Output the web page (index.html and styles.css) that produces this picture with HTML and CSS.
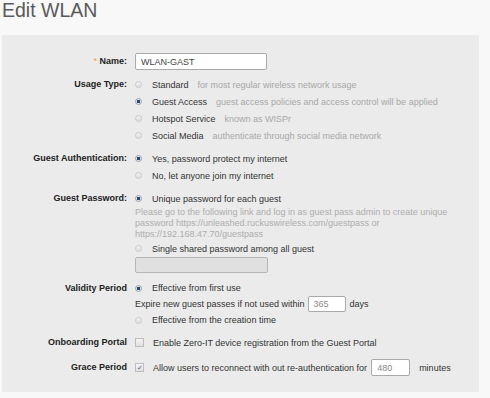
FILE: index.html
```html
<!DOCTYPE html>
<html lang="en">
  <head>
    <meta charset="UTF-8" />
    <title>Edit WLAN</title>
    <link rel="stylesheet" href="styles.css">
  </head>
  <body>
    <h1 class="title">Edit WLAN</h1>
    <div class="panel">
      <div class="row">
        <div class="label"><span class="req">*</span> Name:</div>
        <div class="field">
          <input class="text name-input" type="text" value="WLAN-GAST" />
        </div>
      </div>

      <div class="row">
        <div class="label">Usage Type:</div>
        <div class="field">
          <label class="opt"><input type="radio" name="usage" />Standard<span class="hint">for most regular wireless network usage</span></label>
          <label class="opt"><input type="radio" name="usage" checked />Guest Access<span class="hint">guest access policies and access control will be applied</span></label>
          <label class="opt"><input type="radio" name="usage" />Hotspot Service<span class="hint">known as WISPr</span></label>
          <label class="opt"><input type="radio" name="usage" />Social Media<span class="hint">authenticate through social media network</span></label>
        </div>
      </div>

      <div class="row">
        <div class="label">Guest Authentication:</div>
        <div class="field">
          <label class="opt"><input type="radio" name="auth" checked />Yes, password protect my internet</label>
          <label class="opt"><input type="radio" name="auth" />No, let anyone join my internet</label>
        </div>
      </div>

      <div class="row">
        <div class="label">Guest Password:</div>
        <div class="field">
          <label class="opt"><input type="radio" name="pass" checked />Unique password for each guest</label>
          <p class="desc">
            Please go to the following link and log in as guest pass admin to create unique<br />
            password https://unleashed.ruckuswireless.com/guestpass or<br />
            https://192.168.47.70/guestpass
          </p>
          <label class="opt"><input type="radio" name="pass" />Single shared password among all guest</label>
          <input class="text shared-input" type="text" disabled />
        </div>
      </div>

      <div class="row validity">
        <div class="label">Validity Period</div>
        <div class="field">
          <label class="opt"><input type="radio" name="valid" checked />Effective from first use</label>
          <div class="opt expire">
            Expire new guest passes if not used within
            <input class="text small-input" type="text" value="365" />
            days
          </div>
          <label class="opt"><input type="radio" name="valid" />Effective from the creation time</label>
        </div>
      </div>

      <div class="row">
        <div class="label">Onboarding Portal</div>
        <div class="field">
          <label class="opt"><input type="checkbox" />Enable Zero-IT device registration from the Guest Portal</label>
        </div>
      </div>

      <div class="row grace">
        <div class="label">Grace Period</div>
        <div class="field">
          <label class="opt"><input type="checkbox" checked />Allow users to reconnect with out re-authentication for
            <input class="text small-input minutes-input" type="text" value="480" />
            minutes</label>
        </div>
      </div>
    </div>
  </body>
</html>
```

FILE: styles.css
```css
body {
  margin: 0;
  background-color: #f8f8f8;
  font-family: "Liberation Sans", Arial, sans-serif;
  font-size: 9px;
  color: #333;
}
.title {
  margin: 0;
  height: 35px;
  padding-left: 2px;
  font-size: 19.5px;
  line-height: 20px;
  font-weight: normal;
  color: #5a5a5a;
}
.panel {
  margin-left: 2px;
  width: 477px;
  padding: 18px 0 16px;
  background-color: #ebebeb;
}
.row {
  display: flex;
  margin-bottom: 6px;
}
.row:last-child {
  margin-bottom: 0;
}
.label {
  width: 125px;
  flex-shrink: 0;
  margin-right: 8px;
  text-align: right;
  font-weight: bold;
  color: #222;
  line-height: 17px;
}
.req {
  color: #f0a050;
  font-weight: normal;
}
.field {
  display: flex;
  flex-direction: column;
  align-items: flex-start;
}
.opt {
  display: flex;
  align-items: center;
  height: 17px;
  white-space: nowrap;
}
.hint {
  margin-left: 9px;
  color: #a8a8a8;
}
.desc {
  margin: 0;
  line-height: 11px;
  color: #adadad;
}

/* inputs */
.text {
  box-sizing: border-box;
  height: 17px;
  margin: 0;
  padding: 0 5px;
  border: 1px solid #aaa;
  border-radius: 2px;
  background-color: #fff;
  font-family: inherit;
  font-size: 9px;
  color: #444;
}
.name-input {
  width: 132px;
}
.shared-input {
  width: 133px;
  height: 16px;
  background-color: #e0e0e0;
  border-color: #b5b5b5;
}
.small-input {
  width: 38px;
  height: 16px;
  margin: 0 4px 0 3px;
  color: #888;
}
.minutes-input {
  width: 39px;
  height: 17px;
  margin: 0 9px 0 4px;
}
.validity .opt,
.validity .label {
  height: 16px;
  line-height: 16px;
}
.expire {
  height: 17px;
}
.validity {
  margin-top: 7px;
}
.grace {
  margin-top: 8px;
}

input[type="radio"] {
  appearance: none;
  box-sizing: border-box;
  width: 7px;
  height: 7px;
  margin: 0 10px 0 0;
  border: 1px solid #c8c8c8;
  border-radius: 50%;
  background: linear-gradient(#f4f4f4, #dcdcdc);
}
input[type="radio"]:checked {
  border-color: #9aa4b0;
  background: radial-gradient(circle, #2c4a70 0, #2c4a70 1.5px, #dfe4ea 2px);
}
input[type="checkbox"] {
  appearance: none;
  box-sizing: border-box;
  width: 9px;
  height: 9px;
  margin: 0 9px 0 0;
  border: 1px solid #bcbcbc;
  background: linear-gradient(#f6f6f6, #e0e0e0);
  display: flex;
  align-items: center;
  justify-content: center;
}
input[type="checkbox"]:checked::after {
  content: "\2713";
  font-size: 7px;
  line-height: 7px;
  color: #3a5f90;
}
```
